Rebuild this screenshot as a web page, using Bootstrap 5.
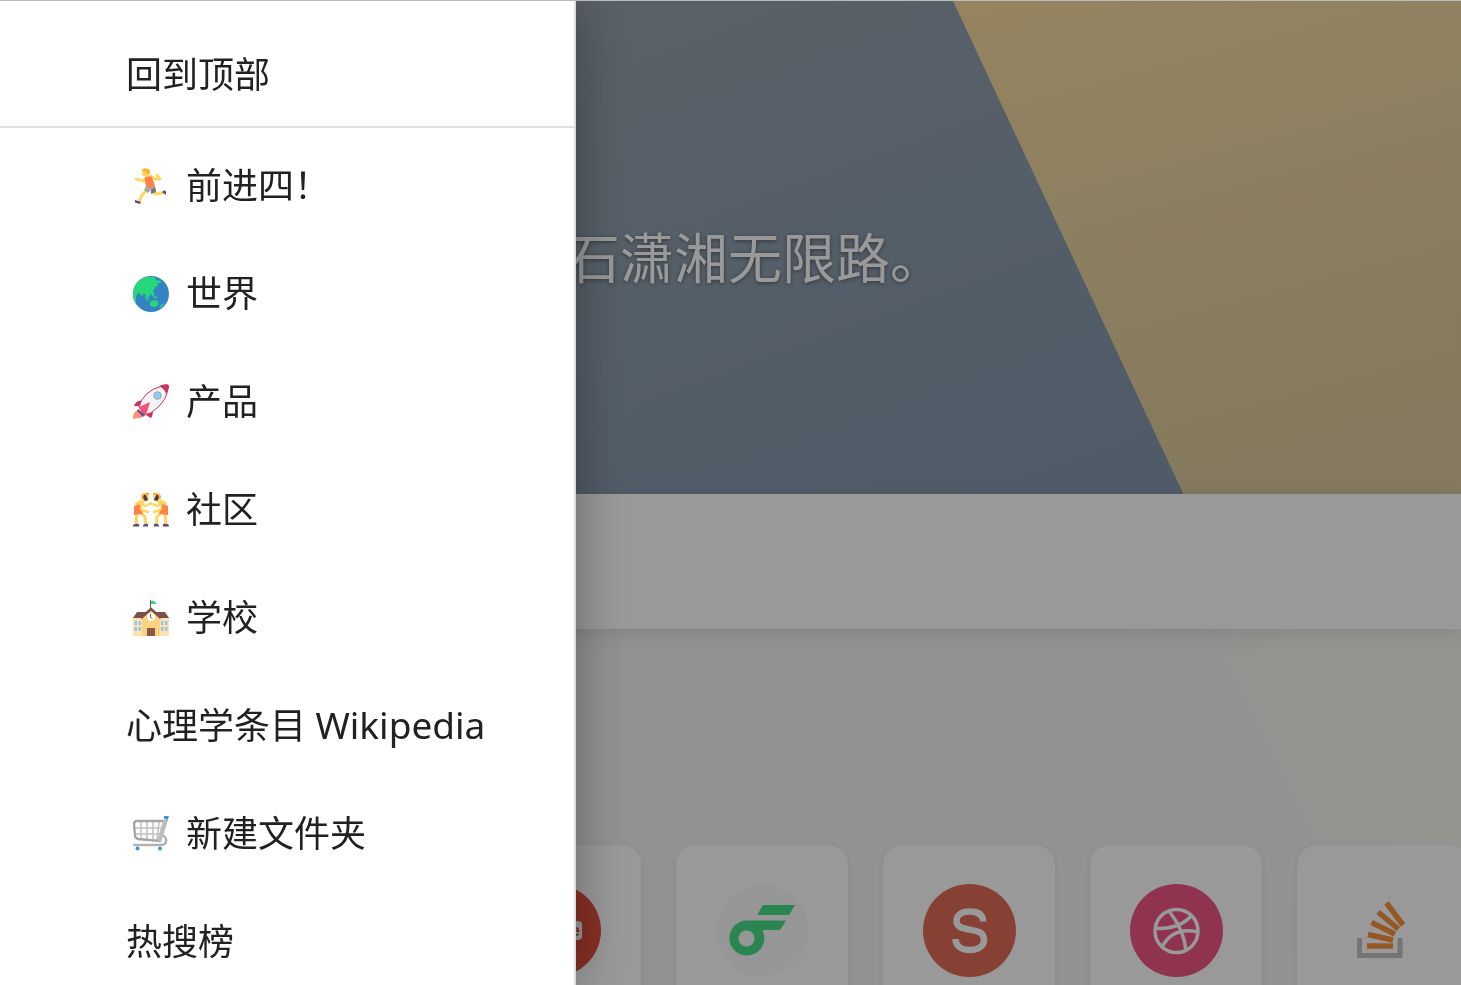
<!DOCTYPE html>
<html lang="zh-CN">
<head>
<meta charset="utf-8">
<meta name="viewport" content="width=device-width, initial-scale=1">
<title>导航</title>
<link rel="stylesheet" href="https://cdn.jsdelivr.net/npm/bootstrap@5.3.0/dist/css/bootstrap.min.css">
<style>
  body { font-family: "Noto Sans", "Noto Sans CJK SC", sans-serif; background: #f1f4f7; color: #212121; }
  .top-line { height: 1px; background: #bbb; z-index: 1060; }
  .hero { height: 494px; background: linear-gradient(160deg, #96a4ae 20%, #8698ae 85%); padding-left: 566px; padding-top: 218px; }
  .hero-sand { inset: 0; clip-path: polygon(65.2% 0, 100% 0, 100% 100%, 81% 100%); background: linear-gradient(165deg, #fadaa0 30%, #f0d9a0 45%, #deca9f 90%); }
  .hero-title { font-size: 54px; line-height: 80px; font-weight: 400; color: #fff; text-shadow: 0 1px 4px rgba(0,0,0,.45); }
  .bar-strip { height: 135px; background: #fff; box-shadow: 0 4px 20px rgba(0,0,0,.11); }
  .sites { padding: 216px 0 0 469px; background: linear-gradient(63deg, #f1f4f7 79%, #f5f4f2 84%, #faf7ee 92%); }
  .site-list { gap: 35px; }
  .site-card { width: 172px; height: 216px; padding-top: 39px; background: #fff; border-radius: 20px; box-shadow: 0 2px 8px rgba(60,80,120,.08); }
  .site-card svg { width: 93px; height: 93px; }
  .offcanvas-backdrop.show { opacity: .4; }
  .offcanvas.drawer { --bs-offcanvas-width: 576px; background: #fff; color: #212121; padding-top: 25px; border-right: 2px solid #dedede; box-shadow: 4px 0 48px rgba(0,0,0,.3); }
  .drawer a { height: 108px; padding-left: 126px; font-size: 36px; line-height: 54px; color: inherit; }
  .drawer a.to-top { height: 104px; border-bottom: 2px solid #dfdfdf; }
  .drawer .latin { font-size: 37px; }
  .drawer svg { width: 36px; height: 36px; margin-left: 7px; margin-right: 17px; flex: none; }
</style>
</head>
<body class="overflow-hidden vh-100">
<div class="top-line fixed-top"></div>

<main class="overflow-hidden vh-100">
  <header class="hero position-relative">
    <div class="hero-sand position-absolute"></div>
    <h1 class="hero-title position-relative text-nowrap m-0">石潇湘无限路。</h1>
  </header>
  <div class="bar-strip position-relative"></div>
  <section class="sites">
    <div class="site-list d-flex">
      <a href="#" class="site-card flex-shrink-0 text-center" aria-label="视频">
        <svg viewBox="0 0 93 93"><circle cx="46" cy="46.500" r="46" fill="#e3503f"/><rect x="28" y="37" width="45" height="19" rx="4" fill="#fff"/><text x="62" y="52" font-family="Roboto, sans-serif" font-size="16" font-weight="700" fill="#e3503f">e</text></svg>
      </a>
      <a href="#" class="site-card flex-shrink-0 text-center" aria-label="Flomo">
        <svg viewBox="0 0 93 93"><circle cx="46.500" cy="46.500" r="46" fill="#fafafa"/><path d="M47 21H79L73 31H41ZM30 36.500H70L64 46H46.500A17.500 17.500 0 1 1 30 36.500ZM30.500 46.500a8 8 0 1 0 .1 0Z" fill="#46de85" fill-rule="evenodd"/></svg>
      </a>
      <a href="#" class="site-card flex-shrink-0 text-center" aria-label="S">
        <svg viewBox="0 0 93 93"><circle cx="46.500" cy="46.500" r="46.500" fill="#e26b58"/><path d="M60 37.500C60 30 54 27.500 46.500 27.500S33.500 31 33.500 37C33.500 50 61 41 61 55.500C61 63 54 66 47 66S32.500 63 32.500 55" fill="none" stroke="#fff" stroke-width="6.500"/></svg>
      </a>
      <a href="#" class="site-card flex-shrink-0 text-center" aria-label="Dribbble">
        <svg viewBox="0 0 93 93"><circle cx="46.500" cy="46.500" r="46.500" fill="#ee5682"/><g fill="none" stroke="#fff" stroke-width="3.500"><circle cx="46.500" cy="47" r="21.500"/><path d="M39 27Q54 46 56 66M26 44.500Q50 45 61 32M32 63Q43 42 68 48"/></g></svg>
      </a>
      <a href="#" class="site-card flex-shrink-0 text-center" aria-label="Stack Overflow">
        <svg viewBox="0 0 93 93"><path d="M22.500 54V71.500H63V54" fill="none" stroke="#c3c3c3" stroke-width="5"/><g stroke="#f7933f" stroke-width="5.500"><path d="M30 62H56M31 50.500L56 56M34.500 38.500L58 50M41 28L61.500 45M49.500 19L66 41"/></g></svg>
      </a>
    </div>
  </section>
</main>

<div class="offcanvas-backdrop show"></div>
<nav class="offcanvas offcanvas-start show drawer" data-bs-backdrop="false" data-bs-scroll="true" aria-label="目录">
  <a class="to-top d-flex align-items-center text-decoration-none" href="#">回到顶部</a>
  <div class="pt-1 overflow-hidden">
    <a class="d-flex align-items-center text-decoration-none" href="#">
      <svg viewBox="0 0 36 36" aria-hidden="true"><path d="M18 8L22 11H27L24 7" stroke="#ffd55c" stroke-width="2.800" fill="none" stroke-linecap="round" stroke-linejoin="round"/><path d="M14 9L10 13L3 11" stroke="#ffd55c" stroke-width="2.600" fill="none" stroke-linecap="round" stroke-linejoin="round"/><path d="M14 22L9 27L6 34M20 23L22 26L31 24.500" stroke="#ffd55c" stroke-width="3" fill="none" stroke-linejoin="round"/><path d="M13 18L11 22L15 25L18 22L18 25L23 24L22 18Z" fill="#a9a7a2"/><path d="M18 22L22 19L23 24L18 26Z" fill="#77736e"/><path d="M12 10Q15 7 19 9L22 18Q18 20 14 19Q11 14 12 10Z" fill="#ff8245"/><circle cx="13" cy="4.800" r="4" fill="#ffd55c"/><path d="M9 2Q11-1 15 1Q18 2 16 7L14 5Q14 3 9 3Z" fill="#ffac33"/><path d="M2 32L8 34L7 36L2 34.500ZM29 24L32 22L33 24L33 27Z" fill="#65437d"/></svg>前进四！</a>
    <a class="d-flex align-items-center text-decoration-none" href="#">
      <svg viewBox="0 0 36 36" aria-hidden="true"><circle cx="18" cy="18" r="18" fill="#3483c4"/><path d="M13 1Q18-.5 23 2L22 4L28 5V7H24L26 9Q23 9 22 12L20 15Q22 18 18 18L16 20L15 23L13 20L11 17L9 21L7 17L4 18L3 21V28Q-1 22 0 16Q2 4 13 1ZM12 20L15 23H12ZM18 18L22 17L20 21ZM20 21L24 20L23 23ZM13 23L18 24L15 25ZM17 26L21 24L25 25L25 29Q24 31 21 31L17 30ZM28 29L31 27L29 31L26 32Z" fill="#26d879"/></svg>世界</a>
    <a class="d-flex align-items-center text-decoration-none" href="#">
      <svg viewBox="0 0 36 36" aria-hidden="true"><path d="M0 35Q0 27 5 26L10 31Q9 35 5 34Z" fill="#ff946f"/><path d="M1 22Q3 16 10 17L9 22ZM16 29L20 25Q20 32 18 34L13 31Z" fill="#d02f63"/><path d="M6 23Q10 7 29 2Q36 0 35 2Q35 15 23 25Q18 30 11 31Z" fill="#f4f4f4" stroke="#d02f63"/><path d="M26 2Q33-1 35.500 1Q37 5 33 10Q32 5 26 2Z" fill="#d02f63"/><path d="M6 23L17 18L13 31L10 30Z" fill="#fa4f78"/><path d="M5 25L12 31L10 33L4 27Z" fill="#67508b"/><circle cx="24.500" cy="11.500" r="3.800" fill="#92c8f5" stroke="#9aa7ad"/></svg>产品</a>
    <a class="d-flex align-items-center text-decoration-none" href="#">
      <svg viewBox="0 0 36 36" aria-hidden="true"><defs><g id="wrestler"><path d="M4 21L3 33M8 21L12 25L12.500 33" stroke="#ffd55c" stroke-width="3" fill="none"/><path d="M3 13L7 10L11 11" stroke="#ffd55c" stroke-width="4" fill="none" stroke-linejoin="round"/><path d="M1 14L7 12L9 18L10 22L1 23Z" fill="#ff8245"/><path d="M7 12L12 14L19 11M7 16L11 19L16 20" stroke="#ffd55c" stroke-width="2.400" fill="none" stroke-linejoin="round"/><circle cx="12" cy="5.500" r="4" fill="#ffd55c"/><path d="M8 5Q9 0 16 1V3H12L10 7Z" fill="#ffac33"/><path d="M11 3H13L15 8L12 9L10 6Z" fill="#50355f"/><path d="M0 33.500Q1 31 6 32V34.500H0ZM10 33.500Q11 31 15 32V34.500H10Z" fill="#65437d"/></g></defs><use href="#wrestler"/><use href="#wrestler" transform="matrix(-1 0 0 1 36 0)"/></svg>社区</a>
    <a class="d-flex align-items-center text-decoration-none" href="#">
      <svg viewBox="0 0 36 36" aria-hidden="true"><path d="M0 17H36V36H0Z" fill="#ffe0ae"/><path d="M4 12H32L36 18H0Z" fill="#7b5048"/><path d="M9 36V16L18 8L27 16V36Z" fill="#fad17f"/><path d="M8 18L18 9L28 18" stroke="#7b5048" stroke-width="2.500" fill="none"/><path d="M17.500 9V0" stroke="#7b5048"/><path d="M18 1Q21 0 22 2L24 4L18 4Z" fill="#2bdc85"/><path d="M14 28H22V36H14Z" fill="#8a594d"/><path d="M1.500 21H4V25H1.500ZM5.500 21H8V25H5.500ZM1.500 27H4V31H1.500ZM5.500 27H8V31H5.500ZM28 21H30.500V25H28ZM32 21H34.500V25H32ZM28 27H30.500V31H28ZM32 27H34.500V31H32Z" fill="#89caf5"/><circle cx="18" cy="17" r="4" fill="#fff"/><path d="M17.500 14V17L19.500 19" stroke="#7b5048" fill="none"/></svg>学校</a>
    <a class="d-flex align-items-center text-decoration-none" href="#"><span>心理学条目 <span class="latin">Wikipedia</span></span></a>
    <a class="d-flex align-items-center text-decoration-none" href="#">
      <svg viewBox="0 0 36 36" aria-hidden="true"><path d="M8 6V23M14 6V24M20 6V25M26 6L24 24M2 12H29M3 18H27" stroke="#c0c0c0" stroke-width="1.500"/><path d="M34 3L27 25L5 23Q2 22 2 19L1 8Q1 5 4 5H32" fill="none" stroke="#a5a5a5" stroke-width="2.400"/><path d="M32 5L26 25" stroke="#bdbdbd" stroke-width="4"/><path d="M29 19Q34 21 33 26Q32 29 28 29H0" fill="none" stroke="#b2b2b2" stroke-width="2.400"/><circle cx="4.500" cy="32.500" r="2" fill="#3c94d8"/><circle cx="27" cy="32.500" r="2" fill="#3c94d8"/><path d="M31 0H36L35 3H31Z" fill="#3c94d8"/></svg>新建文件夹</a>
    <a class="d-flex align-items-center text-decoration-none" href="#">热搜榜</a>
  </div>
</nav>
<script src="https://cdn.jsdelivr.net/npm/bootstrap@5.3.0/dist/js/bootstrap.bundle.min.js"></script>
</body>
</html>
